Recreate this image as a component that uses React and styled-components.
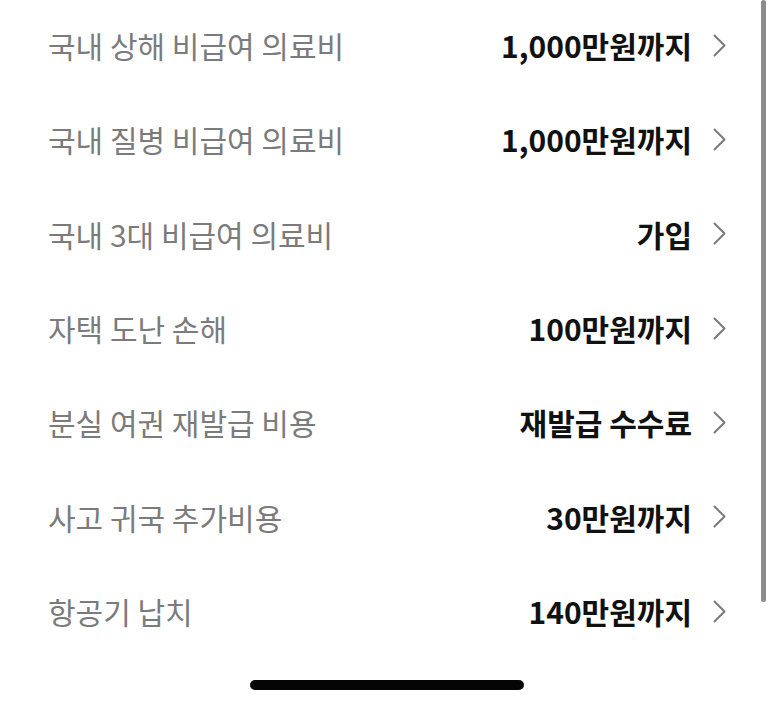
import React from 'react';
import styled, { createGlobalStyle } from 'styled-components';

const GlobalStyle = createGlobalStyle`
  html, body {
    margin: 0;
    padding: 0;
    background: #ffffff;
  }
  body {
    font-family: "Noto Sans CJK KR", "Noto Sans", sans-serif;
  }
`;

const Screen = styled.div`
  position: relative;
  width: 773px;
  height: 706px;
  background: #fff;
  overflow: hidden;
`;

const List = styled.ul`
  list-style: none;
  margin: -2px 0 0;
  padding: 0 47px 0 48px;
`;

const Row = styled.li`
  display: flex;
  align-items: center;
  justify-content: space-between;
  height: 94.33px;
`;

const Label = styled.span`
  font-size: 30px;
  font-weight: 400;
  color: #7b7b7b;
`;

const Value = styled.span`
  display: flex;
  align-items: center;
  gap: 21px;
  font-size: 30px;
  font-weight: 700;
  color: #111;
`;

const Chevron = styled.svg`
  width: 13px;
  height: 23px;
  flex-shrink: 0;
`;

const ScrollBar = styled.div`
  position: absolute;
  top: 0;
  right: 7px;
  width: 5px;
  height: 602px;
  border-radius: 3px;
  background: #8c8c8c;
`;

const HomeBar = styled.div`
  position: absolute;
  left: 250px;
  bottom: 16px;
  width: 274px;
  height: 10px;
  border-radius: 5px;
  background: #050505;
`;

const rows = [
  ['국내 상해 비급여 의료비', '1,000만원까지'],
  ['국내 질병 비급여 의료비', '1,000만원까지'],
  ['국내 3대 비급여 의료비', '가입'],
  ['자택 도난 손해', '100만원까지'],
  ['분실 여권 재발급 비용', '재발급 수수료'],
  ['사고 귀국 추가비용', '30만원까지'],
  ['항공기 납치', '140만원까지'],
];

const App = () => {
  return (
    <>
      <GlobalStyle />
      <Screen>
        <List>
          {rows.map(([label, value], i) => (
            <Row key={i}>
              <Label>{label}</Label>
              <Value>
                {value}
                <Chevron viewBox="0 0 13 23" fill="none">
                  <path d="M1.5 1.5 L11.5 11.5 L1.5 21.5" stroke="#7a7a7a" strokeWidth="2" strokeLinecap="round" strokeLinejoin="round" />
                </Chevron>
              </Value>
            </Row>
          ))}
        </List>
        <ScrollBar />
        <HomeBar />
      </Screen>
    </>
  );
};

export default App;
